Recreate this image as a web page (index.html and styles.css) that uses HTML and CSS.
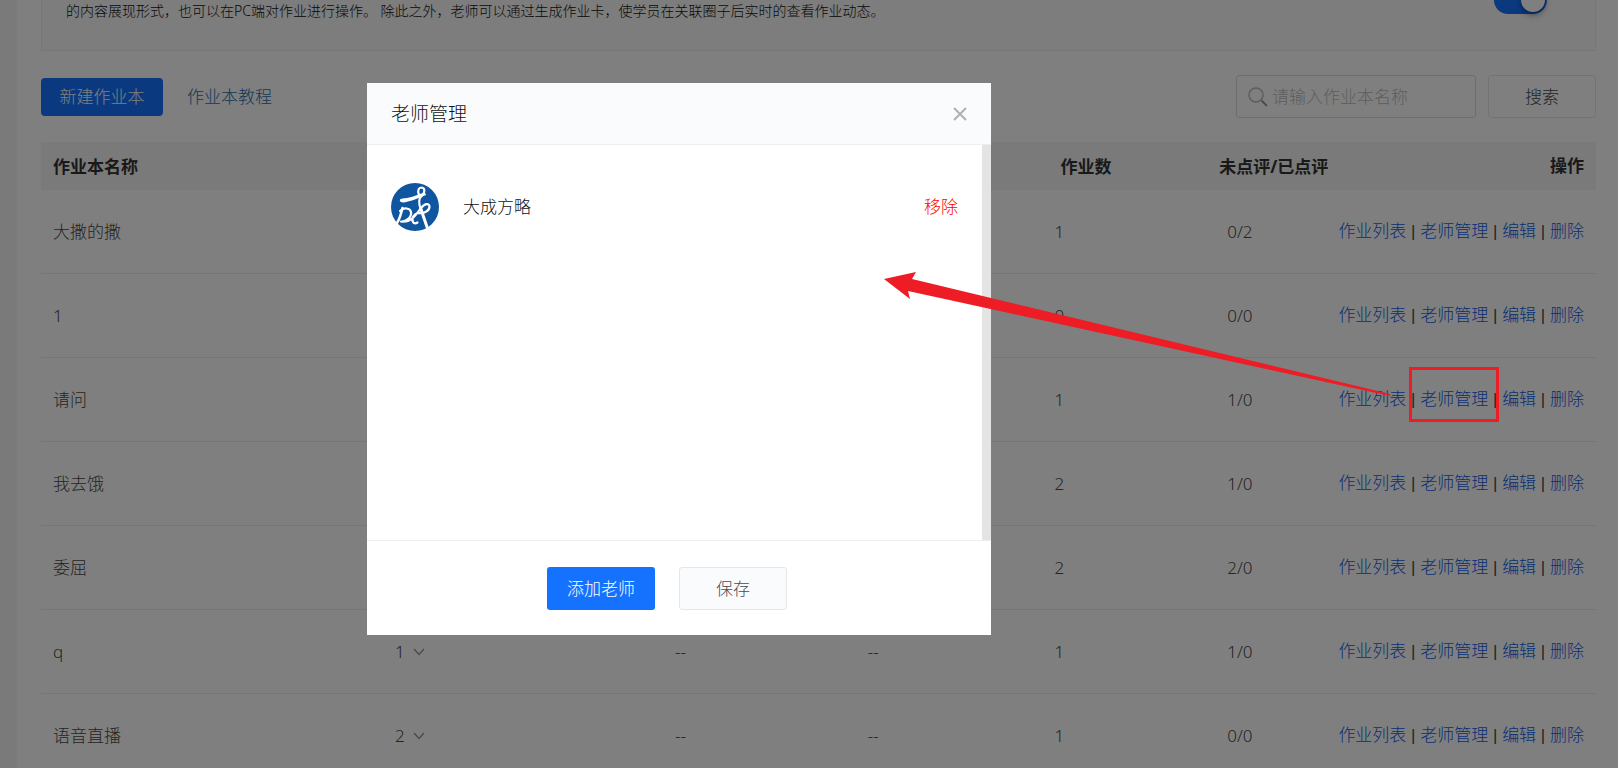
FILE: index.html
```html
<!DOCTYPE html>
<html lang="zh-CN">
<head>
  <meta charset="UTF-8" />
  <meta name="viewport" content="width=device-width, initial-scale=1.0"/>
  <title>作业本</title>
  <link rel="stylesheet" href="styles.css">
</head>
<body>
  <div class="page">
    <main class="main">
      <!-- 说明 -->
      <section class="intro">
        <p class="intro-text">的内容展现形式，也可以在PC端对作业进行操作。 除此之外，老师可以通过生成作业卡，使学员在关联圈子后实时的查看作业动态。</p>
        <input type="checkbox" class="switch" aria-label="作业本" checked>
      </section>

      <!-- 工具栏 -->
      <div class="toolbar">
        <button class="btn-new">新建作业本</button>
        <a class="guide" href="#">作业本教程</a>
        <form class="search">
          <label class="search-box">
            <svg class="search-icon" viewBox="0 0 20 20" aria-hidden="true">
              <circle cx="8" cy="8" r="7"/>
              <path class="handle" d="M13.5 13.5 L19 19"/>
            </svg>
            <input type="text" class="search-input" aria-label="作业本名称" placeholder="请输入作业本名称">
          </label>
          <button type="button" class="btn btn-plain">搜索</button>
        </form>
      </div>

      <!-- 作业本列表 -->
      <table class="list">
        <colgroup>
          <col class="col-name"><col class="col-teacher"><col class="col-a"><col class="col-b"><col class="col-count"><col class="col-review"><col>
        </colgroup>
        <thead>
          <tr>
            <th>作业本名称</th><th></th><th></th><th></th>
            <th class="count">作业数</th><th class="review">未点评/已点评</th><th class="ops">操作</th>
          </tr>
        </thead>
        <tbody>
          <tr>
            <td>大撒的撒</td><td></td><td></td><td></td>
            <td class="count">1</td><td class="review">0/2</td>
            <td class="ops"><a href="#">作业列表</a> | <a href="#">老师管理</a> | <a href="#">编辑</a> | <a href="#">删除</a></td>
          </tr>
          <tr>
            <td>1</td><td></td><td></td><td></td>
            <td class="count">0</td><td class="review">0/0</td>
            <td class="ops"><a href="#">作业列表</a> | <a href="#">老师管理</a> | <a href="#">编辑</a> | <a href="#">删除</a></td>
          </tr>
          <tr>
            <td>请问</td><td></td><td></td><td></td>
            <td class="count">1</td><td class="review">1/0</td>
            <td class="ops"><a href="#">作业列表</a> | <a href="#">老师管理</a> | <a href="#">编辑</a> | <a href="#">删除</a></td>
          </tr>
          <tr>
            <td>我去饿</td><td></td><td></td><td></td>
            <td class="count">2</td><td class="review">1/0</td>
            <td class="ops"><a href="#">作业列表</a> | <a href="#">老师管理</a> | <a href="#">编辑</a> | <a href="#">删除</a></td>
          </tr>
          <tr>
            <td>委屈</td><td></td><td></td><td></td>
            <td class="count">2</td><td class="review">2/0</td>
            <td class="ops"><a href="#">作业列表</a> | <a href="#">老师管理</a> | <a href="#">编辑</a> | <a href="#">删除</a></td>
          </tr>
          <tr>
            <td>q</td>
            <td><button class="expand">1 <svg class="chevron" viewBox="0 0 12 8" aria-hidden="true"><path d="M1 1 L6 6.5 L11 1"/></svg></button></td>
            <td>--</td><td>--</td>
            <td class="count">1</td><td class="review">1/0</td>
            <td class="ops"><a href="#">作业列表</a> | <a href="#">老师管理</a> | <a href="#">编辑</a> | <a href="#">删除</a></td>
          </tr>
          <tr>
            <td>语音直播</td>
            <td><button class="expand">2 <svg class="chevron" viewBox="0 0 12 8" aria-hidden="true"><path d="M1 1 L6 6.5 L11 1"/></svg></button></td>
            <td>--</td><td>--</td>
            <td class="count">1</td><td class="review">0/0</td>
            <td class="ops"><a href="#">作业列表</a> | <a href="#">老师管理</a> | <a href="#">编辑</a> | <a href="#">删除</a></td>
          </tr>
        </tbody>
      </table>
    </main>
  </div>

  <!-- 老师管理弹窗 -->
  <div class="overlay">
    <div class="modal" role="dialog" aria-labelledby="modalTitle">
      <div class="modal-header">
        <h2 class="modal-title" id="modalTitle">老师管理</h2>
        <button class="modal-close" aria-label="关闭">
          <svg viewBox="0 0 14 14" aria-hidden="true"><path d="M1 1 L13 13 M13 1 L1 13"/></svg>
        </button>
      </div>
      <div class="modal-body">
        <div class="teacher">
          <svg class="avatar" viewBox="0 0 48 48" aria-hidden="true">
            <circle cx="24" cy="24" r="24" fill="#10559f"/>
            <path fill="#fff" d="M9 18 C8 15.5 12 15.5 16 15 C22 14 28 11 34 9.500 L35 12 C29 14 24 17 17 18.500 C13 19.500 10 20 9 18 Z"/>
            <g fill="none" stroke="#fff" stroke-linecap="round" stroke-linejoin="round">
              <path stroke-width="2.2" d="M28 12 C26 7 28 4.500 30.500 4.500 C34.500 5 34 9 31 12.500 C27 16 28 22 30 27"/>
              <path stroke-width="3" d="M30 26 C31.500 31 34 38 36 44"/>
              <path stroke-width="2.6" d="M6 40 C8 37 10 31 11.500 25"/>
              <path stroke-width="2.2" d="M9 28 C13 24 19 25 20 29 C21 34 15 39 10 38.500 C20 40 25 32 30 25 C34 20 38.500 20 38.500 24 C38 28 33 30.500 28 30 C23 30 20 36 22 39 C23 41 25 40.500 26.500 39.500"/>
            </g>
          </svg>
          <span class="teacher-name">大成方略</span>
          <button class="remove">移除</button>
        </div>
      </div>
      <div class="modal-footer">
        <button class="btn btn-primary">添加老师</button>
        <button class="btn btn-plain">保存</button>
      </div>
    </div>
  </div>

  <!-- 标注 -->
  <svg class="mark" viewBox="0 0 620 156" aria-hidden="true">
    <polygon points="4,9 36,2 32,9 510,124 510,126 28,21 30,29"/>
    <rect x="530.5" y="98.5" width="87" height="52"/>
  </svg>
</body>
</html>
```
FILE: styles.css
```css
* {
  box-sizing: border-box;
}

body {
  margin: 0;
  height: 100vh;
  overflow: hidden;
  font-family: "Noto Sans", "Noto Sans CJK SC", sans-serif;
  font-size: 17px;
  font-weight: 300;
  line-height: 24px;
  color: #4a4a4a;
  background-color: #f5f5f5;
}

a {
  color: #1060e6;
  text-decoration: none;
}

button,
input {
  font-family: inherit;
  font-size: inherit;
  font-weight: inherit;
  line-height: inherit;
}

button {
  padding: 0;
  border: none;
  background: none;
  cursor: pointer;
}

.page {
  padding-left: 17px;
}

.main {
  min-height: 100vh;
  padding: 0 22px 0 24px;
  background: #fff;
}

/* 说明 */
.intro {
  display: flex;
  justify-content: space-between;
  align-items: flex-start;
  padding: 0 48px 28px 24px;
  border: 1px solid #eee;
  border-top: none;
  background: #fafafa;
}

.intro-text {
  margin: 0;
  font-size: 14px;
  line-height: 22px;
  color: #111;
}

.switch {
  appearance: none;
  flex: none;
  display: flex;
  justify-content: flex-end;
  width: 53px;
  height: 28px;
  margin: -14px 0 0;
  padding: 2px;
  border-radius: 14px;
  background: #1472ff;
}

.switch::before {
  content: "";
  width: 24px;
  height: 24px;
  border-radius: 50%;
  background: #fff;
  box-shadow: 0 3px 6px rgba(0, 0, 0, 0.4);
}

/* 工具栏 */
.toolbar {
  display: flex;
  align-items: center;
  gap: 24px;
  padding: 24px 0;
}

.btn-new {
  width: 122px;
  height: 38px;
  border-radius: 4px;
  color: #fff;
  background: #1472ff;
}

.guide {
  color: #2a6da8;
}

.search {
  display: flex;
  gap: 12px;
  margin-left: auto;
}

.search-box {
  display: flex;
  align-items: center;
  gap: 4px;
  width: 240px;
  height: 43px;
  padding: 0 11px;
  border: 1px solid #d8d8d8;
  border-radius: 3px;
}

.search-icon {
  flex: none;
  width: 20px;
  height: 20px;
  fill: none;
  stroke: #bbb;
  stroke-width: 1.5;
}

.search-icon .handle {
  stroke: #999;
  stroke-width: 2;
}

.search-input {
  flex: 1;
  min-width: 0;
  padding: 0;
  border: none;
  outline: none;
  background: none;
}

.search-input::placeholder {
  color: #bbb;
}

.btn {
  width: 108px;
  height: 43px;
  border-radius: 3px;
}

.btn-primary {
  color: #fff;
  background: #1472ff;
}

.btn-plain {
  border: 1px solid #e4e6ea;
  color: #4a4a4a;
  background: #fafbfd;
}

.search .btn-plain {
  background: #fff;
}

/* 列表 */
.list {
  width: 100%;
  border-spacing: 0;
  table-layout: fixed;
}

.col-name {
  width: 22%;
}

.col-teacher {
  width: 18%;
}

.col-a {
  width: 12.4%;
}

.col-b {
  width: 12%;
}

.col-count {
  width: 10.6%;
}

.col-review {
  width: 8%;
}

.list th,
.list td {
  padding: 0 12px;
  text-align: left;
  white-space: nowrap;
}

.list th {
  height: 48px;
  padding-top: 2px;
  font-weight: 700;
  color: #333;
  background: #f4f4f4;
}

.list td {
  height: 84px;
  border-bottom: 1px solid #ebebeb;
}

.list th.count {
  padding-left: 18px;
}

.list td.review {
  padding-left: 20px;
}

.list .ops {
  padding-left: 0;
  font-family: "Liberation Sans", "Noto Sans CJK SC", sans-serif;
  text-align: right;
}

.expand {
  display: flex;
  align-items: center;
  gap: 8px;
  color: #4a4a4a;
}

.chevron {
  width: 12px;
  height: 8px;
  fill: none;
  stroke: #999;
  stroke-width: 1.5;
}

/* 弹窗，按左侧内容区居中 */
.overlay {
  position: fixed;
  inset: 0;
  display: flex;
  justify-content: center;
  align-items: flex-start;
  padding: 83px 260px 0 0;
  background: rgba(0, 0, 0, 0.5);
}

.modal {
  width: 624px;
  background: #fff;
}

.modal-header {
  display: flex;
  justify-content: space-between;
  align-items: center;
  height: 62px;
  padding: 0 24px;
  border-bottom: 1px solid #eee;
  background: #fafbfd;
}

.modal-title {
  margin: 0;
  font-size: 19px;
  font-weight: 300;
  color: #111;
}

.modal-close {
  display: flex;
}

.modal-close svg {
  width: 14px;
  height: 14px;
  fill: none;
  stroke: #b0b0b0;
  stroke-width: 2;
}

.modal-body {
  height: 395px;
  padding: 38px 24px;
  border-right: 9px solid #e4e4e4;
}

.teacher {
  display: flex;
  align-items: center;
  gap: 24px;
}

.avatar {
  width: 48px;
  height: 48px;
}

.teacher-name {
  color: #111;
}

.remove {
  margin-left: auto;
  color: #f00;
}

.modal-footer {
  display: flex;
  justify-content: center;
  gap: 24px;
  padding: 26px 24px 25px 0;
  border-top: 1px solid #eee;
}

/* 红色箭头和方框 */
.mark {
  position: absolute;
  top: 270px;
  left: 880px;
  width: 620px;
  height: 156px;
  fill: #ee1c25;
  pointer-events: none;
}

.mark rect {
  fill: none;
  stroke: #ee1c25;
  stroke-width: 3;
}
```
